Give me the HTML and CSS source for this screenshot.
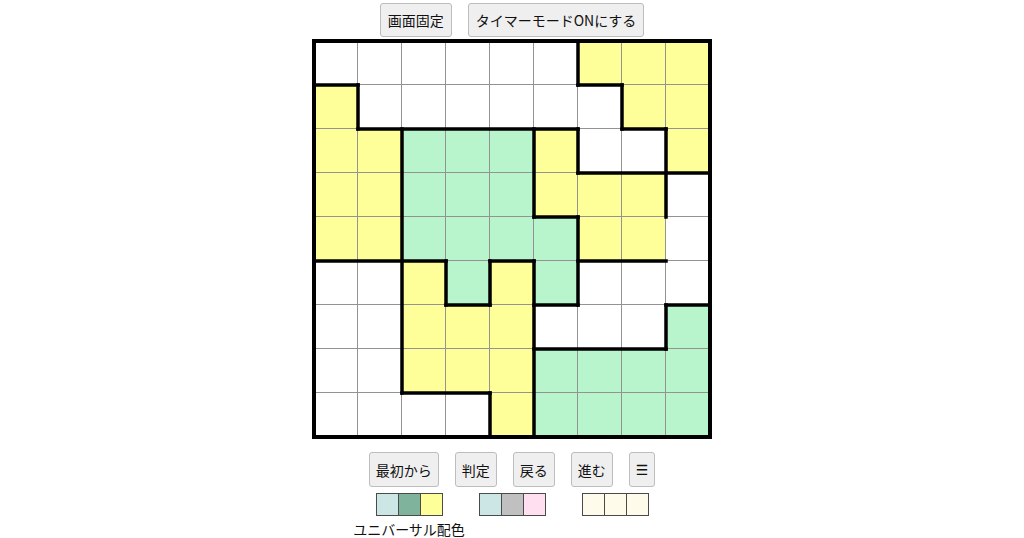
FILE: index.html
```html
<!DOCTYPE html>
<html lang="ja">
<head>
<meta charset="utf-8">
<title>パズル</title>
<link rel="stylesheet" href="styles.css">
</head>
<body>
<div class="page">
  <div class="toolbar top">
    <button class="btn">画面固定</button>
    <button class="btn">タイマーモードONにする</button>
  </div>

  <div class="board">
    <div class="cells">
      <div class="c w"></div><div class="c w"></div><div class="c w"></div><div class="c w"></div><div class="c w"></div><div class="c w"></div><div class="c y"></div><div class="c y"></div><div class="c y"></div>
      <div class="c y"></div><div class="c w"></div><div class="c w"></div><div class="c w"></div><div class="c w"></div><div class="c w"></div><div class="c w"></div><div class="c y"></div><div class="c y"></div>
      <div class="c y"></div><div class="c y"></div><div class="c g"></div><div class="c g"></div><div class="c g"></div><div class="c y"></div><div class="c w"></div><div class="c w"></div><div class="c y"></div>
      <div class="c y"></div><div class="c y"></div><div class="c g"></div><div class="c g"></div><div class="c g"></div><div class="c y"></div><div class="c y"></div><div class="c y"></div><div class="c w"></div>
      <div class="c y"></div><div class="c y"></div><div class="c g"></div><div class="c g"></div><div class="c g"></div><div class="c g"></div><div class="c y"></div><div class="c y"></div><div class="c w"></div>
      <div class="c w"></div><div class="c w"></div><div class="c y"></div><div class="c g"></div><div class="c y"></div><div class="c g"></div><div class="c w"></div><div class="c w"></div><div class="c w"></div>
      <div class="c w"></div><div class="c w"></div><div class="c y"></div><div class="c y"></div><div class="c y"></div><div class="c w"></div><div class="c w"></div><div class="c w"></div><div class="c g"></div>
      <div class="c w"></div><div class="c w"></div><div class="c y"></div><div class="c y"></div><div class="c y"></div><div class="c g"></div><div class="c g"></div><div class="c g"></div><div class="c g"></div>
      <div class="c w"></div><div class="c w"></div><div class="c w"></div><div class="c w"></div><div class="c y"></div><div class="c g"></div><div class="c g"></div><div class="c g"></div><div class="c g"></div>
    </div>
    <svg class="walls" viewBox="-2 -2 400 400" width="400" height="400" aria-hidden="true">
      <g stroke="#000" stroke-width="3.5" stroke-linecap="square" fill="none">
        <path d="M0 44H44 M264 44H308"/>
        <path d="M44 88H264 M308 88H352"/>
        <path d="M264 132H396"/>
        <path d="M220 176H264"/>
        <path d="M0 220H132 M176 220H220 M264 220H352"/>
        <path d="M132 264H176 M220 264H264 M352 264H396"/>
        <path d="M220 308H352"/>
        <path d="M88 352H176"/>
        <path d="M44 44V88"/>
        <path d="M88 88V352"/>
        <path d="M132 220V264"/>
        <path d="M176 220V264 M176 352V396"/>
        <path d="M220 88V176 M220 220V396"/>
        <path d="M264 0V44 M264 88V132 M264 176V264"/>
        <path d="M308 44V88"/>
        <path d="M352 88V176 M352 264V308"/>
        <rect x="0" y="0" width="396" height="396" stroke-width="4"/>
      </g>
    </svg>
  </div>

  <div class="toolbar bottom">
    <button class="btn">最初から</button>
    <button class="btn">判定</button>
    <button class="btn">戻る</button>
    <button class="btn">進む</button>
    <button class="btn menu">☰</button>
  </div>

  <div class="palettes">
    <div class="palette">
      <div class="swatches">
        <span class="sw cyan"></span><span class="sw teal"></span><span class="sw lemon"></span>
      </div>
      <div class="label">ユニバーサル配色</div>
    </div>
    <div class="palette">
      <div class="swatches">
        <span class="sw cyan"></span><span class="sw gray"></span><span class="sw pink"></span>
      </div>
    </div>
    <div class="palette">
      <div class="swatches">
        <span class="sw cream"></span><span class="sw cream"></span><span class="sw cream"></span>
      </div>
    </div>
  </div>
</div>
</body>
</html>
```

FILE: styles.css
```css
html, body {
  margin: 0;
  padding: 0;
  background: #ffffff;
}

body {
  font-family: "Noto Sans CJK JP", "Noto Sans", sans-serif;
  color: #111;
}

.page {
  display: flex;
  flex-direction: column;
  align-items: center;
  padding-top: 3px;
}

.toolbar {
  display: flex;
  justify-content: center;
  gap: 16px;
}

.btn {
  font-family: "Noto Sans CJK JP", "Noto Sans", sans-serif;
  font-size: 14px;
  line-height: 20px;
  color: #111;
  background: #efefef;
  border: 1px solid #bdbdbd;
  border-radius: 3px;
  padding: 6px 7px;
  margin: 0;
}

.toolbar.bottom {
  margin-top: 13px;
}

.toolbar.bottom .btn {
  padding: 7px 6px 6px;
}

.btn.menu {
  font-family: "DejaVu Sans", sans-serif;
}

.toolbar.bottom .btn.menu {
  padding-left: 6px;
  padding-right: 6px;
}

.board {
  position: relative;
  margin-top: 2px;
  padding: 2px;
  width: 396px;
  height: 396px;
}

.cells {
  display: grid;
  grid-template-columns: repeat(9, 44px);
  grid-template-rows: repeat(9, 44px);
}

.c {
  box-sizing: border-box;
  border-right: 1px solid #939393;
  border-bottom: 1px solid #939393;
}

.c.w { background: #ffffff; }
.c.y { background: #ffff99; }
.c.g { background: #b8f4cc; }

.walls {
  position: absolute;
  left: 0;
  top: 0;
  overflow: visible;
}

.palettes {
  display: flex;
  justify-content: center;
  gap: 36px;
  margin-top: 6px;
}

.palette {
  display: flex;
  flex-direction: column;
  align-items: center;
  width: 67px;
}

.swatches {
  display: flex;
  gap: 1px;
  padding: 1px;
  background: #4a4a4a;
}

.sw {
  display: block;
  width: 21px;
  height: 21px;
}

.sw.cyan { background: #cce6e6; }
.sw.teal { background: #80b39b; }
.sw.lemon { background: #ffff99; }
.sw.gray { background: #c0c0c0; }
.sw.pink { background: #ffdff0; }
.sw.cream { background: #fffbeb; }

.label {
  margin-top: 3px;
  font-size: 14px;
  line-height: 20px;
  white-space: nowrap;
  color: #111;
}
```
